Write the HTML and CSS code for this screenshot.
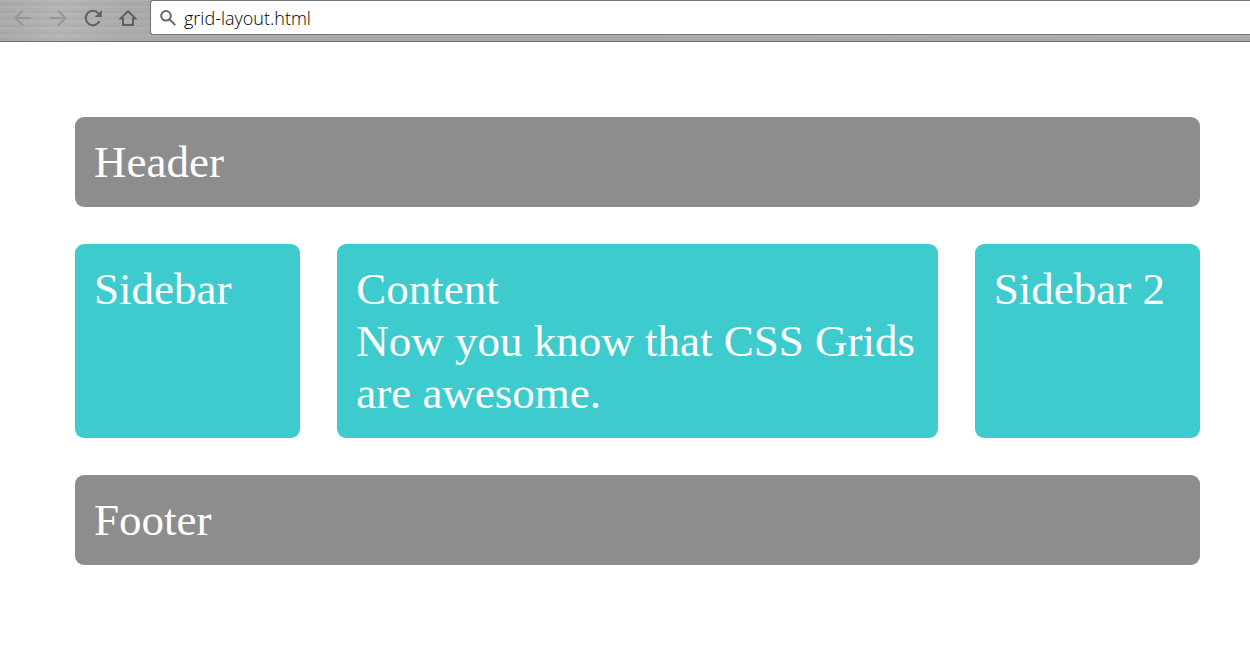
FILE: index.html
```html
<!DOCTYPE html>
<html lang="en">
<head>
<meta charset="utf-8">
<title>grid-layout.html</title>
<link rel="stylesheet" href="styles.css">
</head>
<body>
<nav class="toolbar" aria-label="Browser toolbar">
  <div class="buttons">
    <button class="tool" type="button" aria-label="Back" disabled>
      <svg viewBox="0 0 18 18"><path d="M17 9H2M9 1.5L1.5 9L9 16.5"/></svg>
    </button>
    <button class="tool" type="button" aria-label="Forward" disabled>
      <svg viewBox="0 0 18 18"><path d="M1 9H16M9 1.5L16.500 9L9 16.500"/></svg>
    </button>
    <button class="tool" type="button" aria-label="Reload">
      <svg viewBox="0 0 18 18"><path d="M14.400 4.300A7.200 7.200 0 1 0 15.400 12.200"/><path class="solid" d="M17.800 1V8H10.800Z"/></svg>
    </button>
    <button class="tool" type="button" aria-label="Home">
      <svg viewBox="0 0 18 18"><path d="M9 2.200L1.800 9.400H4V16H14V9.400H16.200Z"/></svg>
    </button>
  </div>
  <label class="address">
    <svg class="search" viewBox="0 0 18 18" aria-hidden="true"><circle cx="7" cy="6.800" r="4.800"/><path d="M10.300 10.100L16.300 16.100"/></svg>
    <input class="url" type="text" value="grid-layout.html" aria-label="Address" spellcheck="false">
  </label>
</nav>
<div class="wrapper">
  <header class="box bar">Header</header>
  <aside class="box">Sidebar</aside>
  <main class="box">Content<br>Now you know that CSS Grids are awesome.</main>
  <aside class="box">Sidebar 2</aside>
  <footer class="box bar">Footer</footer>
</div>
</body>
</html>
```
FILE: styles.css
```css
* {
  box-sizing: border-box;
}

body {
  margin: 0;
  background: #fff;
  font-family: "Liberation Serif", "Times New Roman", serif;
}

.toolbar {
  display: flex;
  height: 42px;
  padding-bottom: 6px;
  border-bottom: 1px solid #6e6e6e;
  background:
    repeating-linear-gradient(to bottom, rgba(255, 255, 255, 0.08) 0 1px, transparent 1px 4px, rgba(0, 0, 0, 0.03) 4px 5px, transparent 5px 7px),
    linear-gradient(to right, #a9a9a9, #b4b4b4 60px, #aaaaaa 130px, #acacac);
}

.buttons {
  display: flex;
  align-items: center;
  gap: 17px;
  width: 150px;
  flex: none;
  padding-left: 14px;
}

.tool {
  width: 18px;
  height: 18px;
  padding: 0;
  border: 0;
  background: none;
  color: #5f5f5f;
}

.tool:disabled {
  color: #969696;
}

.tool svg {
  display: block;
  fill: none;
  stroke: currentColor;
  stroke-width: 2;
}

.tool .solid {
  fill: currentColor;
  stroke: none;
}

.address {
  display: flex;
  flex: 1;
  align-items: center;
  gap: 7px;
  padding-left: 8px;
  border: 1px solid #737373;
  border-right: 0;
  border-radius: 3px 0 0 3px;
  background: #fff;
}

.search {
  width: 18px;
  height: 18px;
  flex: none;
  fill: none;
  stroke: #666;
  stroke-width: 2;
}

.url {
  flex: 1;
  min-width: 0;
  padding: 0;
  border: 0;
  outline: 0;
  background: none;
  color: #000;
  font: 300 18px/24px "Open Sans", "Noto Sans", sans-serif;
}

.wrapper {
  display: grid;
  grid-template-columns: 3fr 8fr 3fr;
  gap: 37px;
  margin: 75px 50px 75px 75px;
}

.box {
  padding: 19px;
  border-radius: 9px;
  background: #3ecbce;
  color: #fff;
  font-size: 45px;
  line-height: 52px;
}

.bar {
  grid-column: 1 / -1;
  background: #8d8d8d;
}
```
